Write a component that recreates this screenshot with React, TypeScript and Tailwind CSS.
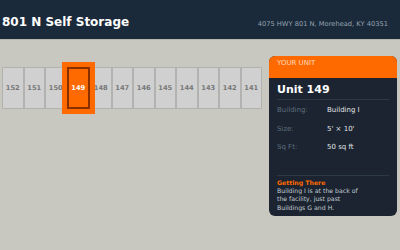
import React from "react";

const units = ["152", "151", "150", "149", "148", "147", "146", "145", "144", "143", "142", "141"];

export default function App() {
  return (
    <div
      className="w-[400px] h-[250px] bg-[#c8c8c0] overflow-hidden"
      style={{ fontFamily: '"DejaVu Sans", sans-serif' }}
    >
      <div className="h-[40px] bg-[#1b2a3a] border-b border-[#b4b6ae] flex items-baseline justify-between pl-[2px] pr-[12px] pt-[15px]">
        <div className="text-[12px] leading-[14px] font-bold text-white">801 N Self Storage</div>
        <div className="text-[6.7px] leading-[14px] text-[#94a3b3]">4075 HWY 801 N, Morehead, KY 40351</div>
      </div>
      <div className="flex justify-between pr-[3px]">
        <div className="pl-[2px] pt-[27px]">
          <div className="flex w-[260px]">
            {units.map((u) =>
              u === "149" ? (
                <div
                  key={u}
                  className="relative z-10 flex-1 h-[42px] flex items-center justify-center bg-[#ff6a00] border-2 border-[#8a3000] ring-[5px] ring-[#ff6a00] text-white text-[6.7px] font-bold"
                >
                  {u}
                </div>
              ) : (
                <div
                  key={u}
                  className="flex-1 h-[42px] flex items-center justify-center bg-[#d0d0d0] border border-[#b2b2b0] text-[#777777] text-[6.7px] font-bold"
                >
                  {u}
                </div>
              )
            )}
          </div>
        </div>
        <div className="mt-[16px] w-[128px] h-[160px] rounded-[6px] bg-[#1b2430] overflow-hidden">
          <div className="h-[22px] bg-[#ff6a00] px-[8px] pt-[2.5px] text-[7px] leading-[9px] text-[#ffd8bc]">YOUR UNIT</div>
          <div className="px-[8px]">
            <div className="pt-[5px] pb-[3px] border-b border-[#2c3a48] text-[11px] leading-[13px] font-bold text-white">Unit 149</div>
            <div className="pt-[1px] text-[7px]">
              <div className="h-[18.5px] flex items-center">
                <div className="w-[50px] text-[#5f6e7e]">Building:</div>
                <div className="text-[#e2e6ea]">Building I</div>
              </div>
              <div className="h-[18.5px] flex items-center">
                <div className="w-[50px] text-[#5f6e7e]">Size:</div>
                <div className="text-[#e2e6ea]">5' × 10'</div>
              </div>
              <div className="h-[18.5px] flex items-center">
                <div className="w-[50px] text-[#5f6e7e]">Sq Ft:</div>
                <div className="text-[#e2e6ea]">50 sq ft</div>
              </div>
            </div>
            <div className="mt-[18.5px] border-t border-[#2c3a48] pt-[1.5px]">
              <div className="text-[6.2px] leading-[9px] font-bold text-[#ff6a00]">Getting There</div>
              <div className="w-[88px] text-[6.2px] leading-[8.6px] text-[#c4ccd4]">
                Building I is at the back of the facility, just past Buildings G and H.
              </div>
            </div>
          </div>
        </div>
      </div>
    </div>
  );
}
